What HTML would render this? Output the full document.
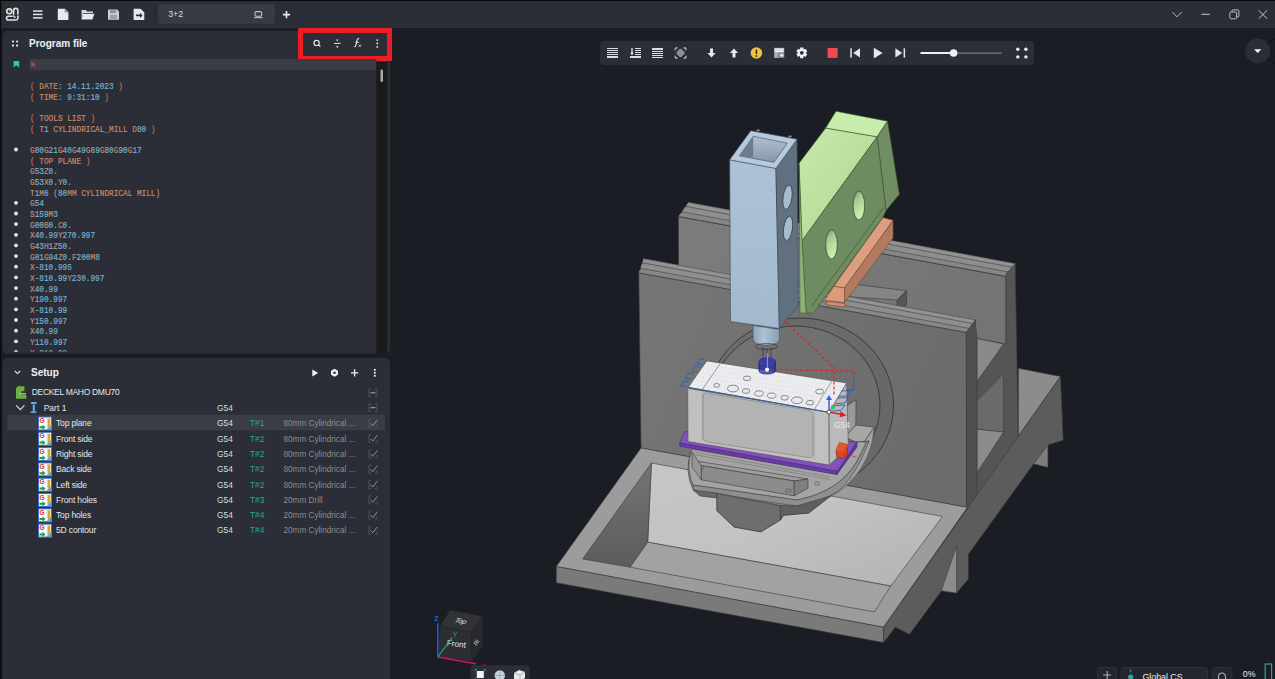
<!DOCTYPE html>
<html><head><meta charset="utf-8"><style>
html,body{margin:0;padding:0;background:#1b1d24;overflow:hidden;width:1275px;height:679px}
svg{display:block}
text{font-family:'Liberation Sans', sans-serif}
.mono text, text.mono{font-family:'Liberation Mono', monospace}
</style></head><body>
<svg width="1275" height="679" viewBox="0 0 1275 679">
<defs>
<clipPath id="codeclip"><rect x="3" y="57" width="373" height="294.8"/></clipPath>
</defs>
<rect x="0" y="0" width="1275" height="679" fill="#1b1d24"/>
<!-- 3D scene -->
<defs>
<linearGradient id="gFloor" x1="0" y1="0" x2="1" y2="1"><stop offset="0" stop-color="#c6c6c6"/><stop offset="0.5" stop-color="#c2c2c2"/><stop offset="1" stop-color="#b2b2b2"/></linearGradient><linearGradient id="gLW" x1="0" y1="0" x2="0" y2="1"><stop offset="0" stop-color="#747474"/><stop offset="1" stop-color="#5c5c5c"/></linearGradient>
<linearGradient id="gRear" x1="0" y1="0" x2="1" y2="0.4"><stop offset="0" stop-color="#7c7c7c"/><stop offset="1" stop-color="#747474"/></linearGradient>
<linearGradient id="gFront" x1="0" y1="0" x2="1" y2="0.3"><stop offset="0" stop-color="#767676"/><stop offset="1" stop-color="#6c6c6c"/></linearGradient>
<linearGradient id="gBlue" x1="0" y1="0" x2="0" y2="1"><stop offset="0" stop-color="#adc2d6"/><stop offset="1" stop-color="#a4b9cd"/></linearGradient>
<linearGradient id="gGreen" x1="0" y1="0" x2="1" y2="1"><stop offset="0" stop-color="#c6e8aa"/><stop offset="1" stop-color="#b2d696"/></linearGradient>
</defs>
<polygon points="678.5,216.5 1006,276.3 1006,400 678.5,330" fill="url(#gRear)" stroke="#3a3a3a" stroke-width="0.6" stroke-linejoin="round" />
<polygon points="688.4,202.4 1015.2,263.8 1015.2,267.8 1006,276.3 678.5,216.5 680.678,213.398 682.5966999999999,211.8047 685.1726,206.9966 686.4576999999999,206.3057" fill="#888888" stroke="#3a3a3a" stroke-width="0.6" stroke-linejoin="round" />
<polygon points="688.4,202.4 1015.2,263.8 1012.6516,267.2625 685.6577,206.3057" fill="#939393" />
<polygon points="685.1726,206.9966 1012.2008000000001,267.875 1009.0636000000001,272.1375 681.7967,211.8047" fill="#8e8e8e" />
<polygon points="680.678,213.398 1008.024,273.55 1006.0,276.3 678.5,216.5" fill="#868686" />
<polyline points="685.6577,206.3057 1012.6516,267.2625" fill="none" stroke="#4a4a4a" stroke-width="0.7" />
<polyline points="681.7967,211.8047 1009.0636000000001,272.1375" fill="none" stroke="#4a4a4a" stroke-width="0.7" />
<polyline points="678.5,216.5 1006.0,276.3" fill="none" stroke="#3e3e3e" stroke-width="0.7" />
<polyline points="688.4,202.4 1015.2,263.8" fill="none" stroke="#5a5a5a" stroke-width="0.5" />
<polygon points="1006,274 1015.2,263.8 1018.4,440 968,520 966,335 974.5,338 1006,344" fill="#555555" stroke="#3a3a3a" stroke-width="0.6" stroke-linejoin="round" />
<polygon points="974.5,338 1003.5,344 974.5,385" fill="#8a8a8a" stroke="#3a3a3a" stroke-width="0.6" stroke-linejoin="round" />
<polygon points="974.5,403 1003.5,373.5 1003.5,432 974.5,429" fill="#6a6a6a" stroke="#3a3a3a" stroke-width="0.6" stroke-linejoin="round" />
<polygon points="974.5,429 1003.5,432 974.5,476.5" fill="#8c8c8c" stroke="#3a3a3a" stroke-width="0.6" stroke-linejoin="round" />
<polygon points="1018.4,368.3 1060.5,376.5 1018.4,436.2" fill="#8c8c8c" stroke="#3a3a3a" stroke-width="0.6" stroke-linejoin="round" />
<polygon points="852,284 906.5,290.7 897,300 850,297" fill="#858585" stroke="#3a3a3a" stroke-width="0.6" stroke-linejoin="round" />
<polygon points="897,300 906.5,290.7 906.5,305 897,312" fill="#565656" stroke="#3a3a3a" stroke-width="0.6" stroke-linejoin="round" />
<polygon points="643.6,258.8 975.1,320 975.1,324 966.3,332.6 638.8,273 639.856,269.876 641.1983999999999,268.2714 642.0352,263.4292 643.0704,262.7334" fill="#888888" stroke="#3a3a3a" stroke-width="0.6" stroke-linejoin="round" />
<polygon points="643.6,258.8 975.1,320.0 972.6624,323.4902 642.2704,262.7334" fill="#939393" />
<polygon points="642.0352,263.4292 972.2312,324.1076 969.2304,328.4042 640.3983999999999,268.2714" fill="#8e8e8e" />
<polygon points="639.856,269.876 968.236,329.82800000000003 966.3,332.6 638.8,273.0" fill="#868686" />
<polyline points="642.2704,262.7334 972.6624,323.4902" fill="none" stroke="#4a4a4a" stroke-width="0.7" />
<polyline points="640.3983999999999,268.2714 969.2304,328.4042" fill="none" stroke="#4a4a4a" stroke-width="0.7" />
<polyline points="638.8,273.0 966.3,332.6" fill="none" stroke="#3e3e3e" stroke-width="0.7" />
<polyline points="643.6,258.8 975.1,320" fill="none" stroke="#5a5a5a" stroke-width="0.5" />
<polygon points="638.8,273 966.3,332.6 966.6,507.2 641,448" fill="url(#gFront)" stroke="#3a3a3a" stroke-width="0.6" stroke-linejoin="round" />
<polygon points="966.3,332.6 975.1,320 977.2,340 977.2,520 966.6,507.2" fill="#4e4e4e" stroke="#3a3a3a" stroke-width="0.6" stroke-linejoin="round" />
<polygon points="556.3,566.5 641,448 966.6,507.2 968.4,506 883.6,627.2" fill="#9c9c9c" stroke="#3a3a3a" stroke-width="0.6" stroke-linejoin="round" />
<polygon points="556.3,566.5 883.6,627.2 883.6,642.6 556.3,582.7" fill="#7a7a7a" stroke="#3a3a3a" stroke-width="0.6" stroke-linejoin="round" />
<polygon points="1060.5,376.5 883.6,627.2 883.6,642.6 895.3,627.2 909.5,634.3 939,594.3 941.3,590.7 956.6,593.1 968.4,579 968.4,554.2 1033.7,463.8 1047.9,467.3 1047.9,445 1063.2,440.2" fill="#5c5c5c" stroke="#3a3a3a" stroke-width="0.6" stroke-linejoin="round" />
<polygon points="1033.7,463.8 1047.9,445 1047.9,467.3" fill="#7e7e7e" stroke="#3a3a3a" stroke-width="0.6" stroke-linejoin="round" />
<polygon points="941.3,590.7 956.6,546 956.6,593.1" fill="#8c8c8c" stroke="#3a3a3a" stroke-width="0.6" stroke-linejoin="round" />
<polygon points="651.4,463 942.5,516.5 890.8,586 647.7,542.2" fill="url(#gFloor)" stroke="#3a3a3a" stroke-width="0.6" stroke-linejoin="round" />
<polygon points="651.4,463 647.7,542.2 630.1,567.2 582.6,559" fill="url(#gLW)" stroke="#3a3a3a" stroke-width="0.6" stroke-linejoin="round" />
<polygon points="647.7,542.2 890.8,586 874.3,611.9 630.1,567.2" fill="#a2a2a2" stroke="#3a3a3a" stroke-width="0.6" stroke-linejoin="round" />
<path fill-rule="evenodd" d="M893.5 405 A93.5 87 0 1 0 706.5 405 A93.5 87 0 1 0 893.5 405Z M880 405 A85 79 0 1 0 710 405 A85 79 0 1 0 880 405Z" fill="#5e5e5e" opacity="0.35"/>
<g fill="none" stroke="#2e2e2e" stroke-width="0.8">
<ellipse cx="800" cy="405" rx="93.5" ry="87"/>
<ellipse cx="795" cy="405" rx="85" ry="79"/>
</g>
<polygon points="846.5,406 856,400 855.8,425 846.5,436" fill="#9a9a9a" stroke="#3a3a3a" stroke-width="0.6" stroke-linejoin="round" />
<polygon points="845,437 855.8,425 874.4,427.2 862,445" fill="#a6a6a6" stroke="#3a3a3a" stroke-width="0.6" stroke-linejoin="round" />
<path d="M862 445 L874.4 427.2 Q872 460 850 482 Q838 494 826 498 L828 492 Q848 478 856 462Z" fill="#a2a2a2" stroke="#3a3a3a" stroke-width="0.5"/>
<path d="M691 452 Q684 471 693.3 490 L716.9 493 L716.9 510.6 L734.1 527 L760.8 531.8 L780.4 520 L783.5 515.3 L808.6 513 L830.6 496 Q856 472 869 441 L857 442 Z" fill="#8a8a8a" stroke="#3a3a3a" stroke-width="0.6"/>
<path d="M691 452 Q686 468 693 485 L797 500 Q838 492 856 463 Q862 452 866.5 442 L857 442 L837 474.5 L691.8 449 Z" fill="#a4a4a4" stroke="#3a3a3a" stroke-width="0.5"/>
<path d="M693 485 L797 500 Q838 492 856 463 Q862 452 866.5 442 L869 441 Q858 472 840 490 Q820 503 797 506 L694 491 Z" fill="#8e8e8e" stroke="#3a3a3a" stroke-width="0.5"/>
<polygon points="696,461 808,479 794.2,481 701.2,465.6" fill="#9e9e9e" stroke="#3a3a3a" stroke-width="0.6" stroke-linejoin="round" />
<polygon points="701.2,465.6 794.2,481 794.2,495.8 701.2,479.8" fill="#8c8c8c" stroke="#3a3a3a" stroke-width="0.6" stroke-linejoin="round" />
<polygon points="794.2,481 808,479 808,488.3 794.2,495.8" fill="#7e7e7e" stroke="#3a3a3a" stroke-width="0.6" stroke-linejoin="round" />
<polygon points="692,452 701.2,465.6 701.2,479.8 692,467" fill="#969696" stroke="#3a3a3a" stroke-width="0.6" stroke-linejoin="round" />
<polyline points="694,452 830,477" fill="none" stroke="#6a6a6a" stroke-width="0.5" />
<polyline points="694,454.5 830,479.5" fill="none" stroke="#6a6a6a" stroke-width="0.5" />
<path d="M786 489 h5 v3 h-5z M815 482 h4 v3 h-4z M703 466 v4" fill="none" stroke="#4a4a4a" stroke-width="0.5"/>
<polygon points="716.9,493 780.4,505.5 780.4,520 760.8,531.8 734.1,527 716.9,510.6" fill="#6e6e6e" stroke="#3a3a3a" stroke-width="0.6" stroke-linejoin="round" />
<polygon points="780.4,505.5 797,506 830.6,496 808.6,513 783.5,515.3 780.4,520" fill="#606060" stroke="#3a3a3a" stroke-width="0.6" stroke-linejoin="round" />
<polygon points="693.3,490 716.9,493 716.9,498 700,496" fill="#666666" stroke="#3a3a3a" stroke-width="0.6" stroke-linejoin="round" />
<polyline points="717,494 780,506" fill="none" stroke="#4a4a4a" stroke-width="0.6" stroke-dasharray="1.5 1"/>
<polygon points="684.6,431.6 857,442.1 837.6,471.3 679.7,443" fill="#8252ba" stroke="#4a2a70" stroke-width="0.6" stroke-linejoin="round" />
<polygon points="679.7,443 837.6,471.3 836.8,474.5 679.7,446.2" fill="#6a3aa8" stroke="#4a2a70" stroke-width="0.5" stroke-linejoin="round" />
<polygon points="837.6,471.3 857,442.1 857,447 836.8,474.5" fill="#5c3090" stroke="#4a2a70" stroke-width="0.5" stroke-linejoin="round" />
<polygon points="687.7,388.3 829,412.3 829.3,465.1 688,441.5" fill="#c0c0c0" stroke="#505050" stroke-width="0.6" stroke-linejoin="round" />
<polygon points="829,412.3 846.6,383 848.4,447 829.3,465.1" fill="#bababa" stroke="#505050" stroke-width="0.6" stroke-linejoin="round" />
<polygon points="706.8,360.9 846.6,383 829,412.3 688.3,387.4" fill="#ececee" stroke="#505050" stroke-width="0.6" stroke-linejoin="round" />
<polyline points="720,364 702.4,389.2" fill="none" stroke="#5a5a5a" stroke-width="0.6" />
<polyline points="832,381 814,410" fill="none" stroke="#6a6a6a" stroke-width="0.6" />
<path d="M706 393 L808 410 Q813 411 813 416 L813 454 Q813 458 808 457.5 L708 442 Q703 441 703 437 L703 397 Q703 392.5 706 393Z" fill="#b3b3b3" stroke="#7a7a7a" stroke-width="0.6"/>
<polyline points="702.4,389.2 702.4,441" fill="none" stroke="#8a8a8a" stroke-width="0.5" />
<polyline points="814,410 814,460" fill="none" stroke="#8a8a8a" stroke-width="0.5" />
<g stroke="#a8c4e0" stroke-width="0.7" stroke-dasharray="0.7 2.8">
<line x1="704.2" y1="364.7" x2="844.1" y2="387.2"/>
<line x1="701.5" y1="368.5" x2="841.6" y2="391.4"/>
<line x1="698.9" y1="372.3" x2="839.1" y2="395.6"/>
<line x1="696.2" y1="376.0" x2="836.5" y2="399.7"/>
<line x1="693.6" y1="379.8" x2="834.0" y2="403.9"/>
<line x1="690.9" y1="383.6" x2="831.5" y2="408.1"/>
</g>
<ellipse cx="716.7" cy="385.4" rx="3" ry="1.9" fill="none" stroke="#606060" stroke-width="0.7"/>
<ellipse cx="733" cy="388.5" rx="5.5" ry="3.4" fill="none" stroke="#606060" stroke-width="0.7"/>
<ellipse cx="746" cy="391" rx="3.7" ry="2.3" fill="none" stroke="#606060" stroke-width="0.7"/>
<ellipse cx="759" cy="393.5" rx="4.3" ry="2.7" fill="none" stroke="#606060" stroke-width="0.7"/>
<ellipse cx="771.7" cy="395.6" rx="4.2" ry="2.6" fill="none" stroke="#606060" stroke-width="0.7"/>
<ellipse cx="784.7" cy="397.8" rx="3.7" ry="2.3" fill="none" stroke="#606060" stroke-width="0.7"/>
<ellipse cx="797" cy="400.3" rx="5.5" ry="3.4" fill="none" stroke="#606060" stroke-width="0.7"/>
<ellipse cx="810" cy="402.7" rx="3.7" ry="2.3" fill="none" stroke="#606060" stroke-width="0.7"/>
<ellipse cx="747" cy="378.3" rx="3.7" ry="2.3" fill="none" stroke="#606060" stroke-width="0.7"/>
<ellipse cx="819.6" cy="391.6" rx="4" ry="2.5" fill="none" stroke="#606060" stroke-width="0.7"/>
<polyline points="688.3,387.4 829,412.3" fill="none" stroke="#2a5aa8" stroke-width="0.9" />
<g fill="none" stroke="#2a60b0" stroke-width="0.9">
<path d="M705 359.3 L700 358.8 L697 363.8 L703 364.40000000000003"/>
<path d="M699.8 366.8 L694.8 366.3 L691.8 371.3 L697.8 371.90000000000003"/>
<path d="M693.6 373.9 L688.6 373.4 L685.6 378.4 L691.6 379.0"/>
<path d="M688.3 381.4 L683.3 380.9 L680.3 385.9 L686.3 386.5"/>
<path d="M841 391 L852 390.4 L848 395.8 L839 396.4"/>
<path d="M837.5 398.2 L848.5 397.59999999999997 L844.5 403.0 L835.5 403.59999999999997"/>
<path d="M834 405.6 L845 405.0 L841 410.40000000000003 L832 411.0"/>
<path d="M854 378.5 v11.5 h-7"/>
</g>
<polygon points="826.8,301 845,303.5 845,307 827,305" fill="#d08c6c" stroke="#6a3a20" stroke-width="0.5" stroke-linejoin="round" />
<polygon points="844.5,287.8 893.1,220.3 893.1,238 844.5,302.6" fill="#b27a60" stroke="#6a3a20" stroke-width="0.5" stroke-linejoin="round" />
<polygon points="833.8,286.4 882.8,217.4 893.1,220.3 844.5,287.8" fill="#dc9e80" stroke="#6a3a20" stroke-width="0.5" stroke-linejoin="round" />
<polygon points="824.6,300.3 833.8,286.4 844.5,287.8 844.5,302.6" fill="#dc9c7c" stroke="#6a3a20" stroke-width="0.5" stroke-linejoin="round" />
<polygon points="799,163.3 825.7,128 877.2,136.8 802,240.8" fill="url(#gGreen)" stroke="#3a5a2a" stroke-width="0.6" stroke-linejoin="round" />
<polygon points="825.7,128 836,111.2 887.5,121.2 877.2,136.8" fill="#c8ecac" stroke="#3a5a2a" stroke-width="0.6" stroke-linejoin="round" />
<polygon points="877.2,136.8 887.5,121.2 899.3,194.3 886,210.5" fill="#718d63" stroke="#3a5a2a" stroke-width="0.6" stroke-linejoin="round" />
<polygon points="802,240.8 877.2,136.8 886,210.5 882.8,217.4 815,310.7 812.4,313 806,313" fill="#6f8b61" stroke="#3a5a2a" stroke-width="0.6" stroke-linejoin="round" />
<polyline points="884,207 811.8,306" fill="none" stroke="#3a5a2a" stroke-width="0.7" />
<polygon points="799,163.3 802,240.8 806,313 800,313" fill="#90b07a" stroke="#3a5a2a" stroke-width="0.5" stroke-linejoin="round" />
<linearGradient id="gHole" x1="0" y1="0" x2="0.4" y2="1"><stop offset="0" stop-color="#6a8a5a"/><stop offset="0.35" stop-color="#a8c890"/><stop offset="1" stop-color="#d0f0b0"/></linearGradient><ellipse cx="858.9" cy="205.4" rx="5.8" ry="14.4" fill="url(#gHole)" stroke="#2e4a22" stroke-width="0.7"/>
<ellipse cx="831.5" cy="244.3" rx="5.8" ry="14.6" fill="url(#gHole)" stroke="#2e4a22" stroke-width="0.7"/>
<polygon points="729.7,159.8 775.9,168.4 779.3,328.4 730.5,321.5" fill="url(#gBlue)" stroke="#3a4a5a" stroke-width="0.6" stroke-linejoin="round" />
<polygon points="775.9,168.4 797,139.2 798.4,306.3 779.3,328.4" fill="#617080" stroke="#3a4a5a" stroke-width="0.6" stroke-linejoin="round" />
<polygon points="729.7,159.8 750.8,130.7 797,139.2 775.9,168.4" fill="#b6cade" stroke="#4a5a6a" stroke-width="0.6" stroke-linejoin="round" />
<linearGradient id="gInner" x1="0" y1="0" x2="0" y2="1"><stop offset="0" stop-color="#b0c0d0"/><stop offset="1" stop-color="#8898a8"/></linearGradient>
<polygon points="739.4,155.8 753.2,136.3 787.3,143.2 773.9,162.3" fill="url(#gInner)" stroke="#3a4a5a" stroke-width="0.6" stroke-linejoin="round" />
<rect x="756.5" y="129.6" width="3" height="1.6" fill="#8a9aaa"/><rect x="788.5" y="135.6" width="3" height="1.6" fill="#8a9aaa"/>
<polygon points="739.4,155.8 753.2,136.3 753.2,157.4 745,157" fill="#6c7c8c" />
<ellipse cx="787.5" cy="197.3" rx="4.4" ry="12.2" transform="rotate(8 787.5 197.3)" fill="#a8bcd0" stroke="#2a3440" stroke-width="0.7"/>
<ellipse cx="788" cy="228.4" rx="4.4" ry="12.2" transform="rotate(8 788 228.4)" fill="#a8bcd0" stroke="#2a3440" stroke-width="0.7"/>
<linearGradient id="gNose" x1="0" y1="0" x2="1" y2="0"><stop offset="0" stop-color="#8ea2b6"/><stop offset="0.4" stop-color="#aec2d6"/><stop offset="1" stop-color="#8a9eb2"/></linearGradient>
<path d="M753 325.5 L779.5 329.5 L779.5 338 Q779.5 345 766 345 Q753 345 753 338 Z" fill="url(#gNose)" stroke="#3a4a5a" stroke-width="0.5"/>
<g fill="none" stroke="#2a2a2a" stroke-width="0.6"><ellipse cx="766.5" cy="346.5" rx="11" ry="3"/><path d="M763 347 v11 M771 347 v11 M767 348 v10"/></g>
<path d="M759 361 v10 a8.2 3 0 0 0 16.4 0 v-10 a8.2 3 0 0 0 -16.4 0Z" fill="#2424a8" fill-opacity="0.7" stroke="#10109a" stroke-width="0.7"/>
<ellipse cx="767.2" cy="361" rx="8.2" ry="3" fill="none" stroke="#4a4ae0" stroke-width="0.5"/>
<path d="M767.5 353 v14" stroke="#6a9af0" stroke-width="1.2"/>
<circle cx="767.1" cy="369.6" r="2.1" fill="#ffffff"/>
<g fill="none" stroke="#e02020" stroke-width="1.1" stroke-dasharray="3 2">
<path d="M786 322 L834 368 L834 395 M770 369.6 L854 371 L854 378"/>
</g>
<path d="M829 412 v-14" stroke="#3060e0" stroke-width="1.5"/><path d="M826 400 l3-5 l3 5z" fill="#3060e0"/>
<path d="M829 412 L842 414.6" stroke="#e02020" stroke-width="1.5"/><path d="M840.5 411.2 L846.6 415.6 L839.6 417.2z" fill="#e02020"/>
<circle cx="833" cy="407" r="2.2" fill="#30c060"/>
<circle cx="829" cy="412" r="2" fill="#ffffff" stroke="#000" stroke-width="0.6"/>
<text x="834" y="427.5" fill="#e8e8e8" font-size="8.5">G54</text>
<polygon points="835.9,450.4 839.4,442.5 847.4,444.3 847.4,454.9 843,458.4 836.8,457.5" fill="#d44a22" stroke="#6a2010" stroke-width="0.5" stroke-linejoin="round" />
<polygon points="835.9,450.4 839.4,442.5 847.4,444.3 843,451.5" fill="#e05a30" />
<path d="M843 454 l14 3" stroke="#e02020" stroke-width="1" stroke-dasharray="2 1.5"/>
<!-- top bar -->
<rect x="0" y="0" width="1275" height="28" fill="#2b2e36"/>
<rect x="0" y="0" width="1275" height="1" fill="#08090b"/>
<rect x="0" y="0" width="1.2" height="679" fill="#08090b"/>
<!-- logo -->
<g fill="none" stroke="#e2e2e4" stroke-width="1.6" stroke-linecap="round">
<circle cx="9.3" cy="11.2" r="2.5"/>
<path d="M13.6 14.2 V10.5 a2.15 2.15 0 0 1 4.3 0 V14"/>
<path d="M12.2 16.3 H8.4 a1.85 1.85 0 0 0 0 3.7 H15.8 a1.9 1.9 0 0 0 2.1-1.9 V16"/>
<path d="M13.6 16 L15.2 17.4" stroke-width="1.3"/>
<path d="M9.3 10.9 L10.6 9.7" stroke-width="1"/>
</g>
<!-- hamburger -->
<g fill="#e6e6e8"><rect x="33" y="10.3" width="9.5" height="1.5"/><rect x="33" y="13.7" width="9.5" height="1.5"/><rect x="33" y="17.1" width="9.5" height="1.5"/></g>
<!-- new file -->
<path d="M57.8 8.8 h7 l3.6 3.6 v7.6 h-10.6z" fill="#e8e8ea"/><path d="M64.6 8.8 v3.8 h3.8" fill="#9a9ca2"/>
<!-- folder -->
<path d="M81.6 10 h4.2 l1.3 1.4 h5.8 v1.6 h-9.6 l-1.7 6.4z" fill="#d8d8da"/><path d="M83 13.8 h11.4 l-2 5.6 h-10.8z" fill="#e8e8ea"/>
<!-- save -->
<path d="M108 9.4 h9 l2 2 v8.4 h-11z" fill="#cfd0d3"/><rect x="110" y="10.2" width="6" height="2.8" fill="#8e9096"/><rect x="110" y="14.8" width="7" height="4.4" fill="#9ea0a5"/>
<!-- export -->
<path d="M133.6 8.8 h7 l3.7 3.6 v7.6 h-10.7z" fill="#e8e8ea"/><path d="M136 14.6 h4 v-1.8 l2.6 2.6 l-2.6 2.6 v-1.8 h-4z" fill="#2b2e36"/>
<rect x="155" y="6" width="1" height="16" fill="#24262d"/>
<!-- tab -->
<rect x="158.2" y="3.8" width="116.7" height="20" rx="3" fill="#383b44"/>
<text x="168.2" y="16.9" fill="#d8d9dc" font-size="8.8">3+2</text>
<g fill="none" stroke="#bfc1c5" stroke-width="1.1"><rect x="255" y="11.6" width="6.6" height="4.6" rx="1.2"/><path d="M254.2 17.6 h8.2"/></g>
<path d="M286.5 11 v7.2 M282.9 14.6 h7.2" stroke="#eeeef0" stroke-width="1.6"/>
<!-- window controls -->
<path d="M1172.3 12 l4.7 4.8 l4.7-4.8" fill="none" stroke="#b8b9bd" stroke-width="1"/>
<path d="M1201.3 14.3 h8.6" stroke="#b8b9bd" stroke-width="1.1"/>
<g fill="none" stroke="#b8b9bd" stroke-width="1"><rect x="1229.8" y="12" width="6.8" height="6.8" rx="1"/><path d="M1232 11.8 v-1 a0.9 0.9 0 0 1 0.9-0.9 h5.1 a0.9 0.9 0 0 1 0.9 0.9 v5.1 a0.9 0.9 0 0 1 -0.9 0.9 h-1.3"/></g>
<path d="M1258.6 10.3 l8.6 8.5 M1267.2 10.3 l-8.6 8.5" stroke="#c4c5c8" stroke-width="1"/>

<!-- left panels -->
<rect x="2.6" y="31" width="387.4" height="322.6" rx="5" fill="#2b2e37"/>
<rect x="2.6" y="358" width="387.4" height="330" rx="5" fill="#2b2e37"/>
<!-- program header -->
<g fill="#f0f0f2"><circle cx="13" cy="41.5" r="1.1"/><circle cx="17.1" cy="41.5" r="1.1"/><circle cx="13" cy="45.6" r="1.1"/><circle cx="17.1" cy="45.6" r="1.1"/></g>
<text x="29" y="46.9" fill="#f2f2f4" font-size="10" font-weight="bold">Program file</text>
<!-- header icons -->
<g fill="none" stroke="#e4e4e6" stroke-width="1.2"><circle cx="316.6" cy="42.9" r="2.6"/><path d="M318.6 44.9 l1.8 1.8"/></g>
<g fill="#e4e4e6"><circle cx="337.3" cy="40.1" r="0.9"/><circle cx="337.3" cy="46.7" r="0.9"/><rect x="334" y="42.9" width="6.6" height="1"/></g>
<path d="M354.3 46.8 c1.3 0 1.6-0.8 1.9-2.5 l0.7-3.6 c0.3-1.5 0.8-2.3 2.2-2.3 M355.6 42.4 h3" fill="none" stroke="#e4e4e6" stroke-width="1.1"/>
<path d="M358.7 44.6 l2.2 2.2 M360.9 44.6 l-2.2 2.2" stroke="#e4e4e6" stroke-width="0.9"/>
<g fill="#e4e4e6"><circle cx="377.3" cy="40.1" r="0.95"/><circle cx="377.3" cy="43.5" r="0.95"/><circle cx="377.3" cy="46.9" r="0.95"/></g>
<!-- red highlight box -->
<rect x="300.5" y="30.5" width="89" height="28" fill="none" stroke="#ee1c25" stroke-width="5"/>
<!-- code area -->
<rect x="29.4" y="59" width="347" height="11" fill="#3a3d46"/>
<rect x="376.3" y="62" width="11" height="291.6" fill="#1a1a1c"/>
<rect x="380.5" y="69.4" width="2.5" height="12.6" rx="1.2" fill="#a8a8aa"/>
<path d="M13.6 61 h5.6 v6.4 l-2.8-2.2 l-2.8 2.2z" fill="#1ed3a2"/>
<g clip-path="url(#codeclip)" class="mono" font-size="8.8" stroke-width="0.18">
<text x="30.5" y="67.40" font-size="7.5" fill="#b86a58">%</text>
<text x="34.05" y="89.21" transform="scale(0.881,1)" xml:space="preserve"><tspan fill="#c0705a" stroke="#c0705a">( </tspan><tspan fill="#c98a62" stroke="#c98a62">DATE</tspan><tspan fill="#72b2d6" stroke="#72b2d6">: 14.11.2023 </tspan><tspan fill="#c0705a" stroke="#c0705a">)</tspan></text>
<text x="34.05" y="99.87" transform="scale(0.881,1)" xml:space="preserve"><tspan fill="#c0705a" stroke="#c0705a">( </tspan><tspan fill="#c98a62" stroke="#c98a62">TIME</tspan><tspan fill="#72b2d6" stroke="#72b2d6">: 9:31:10 </tspan><tspan fill="#c0705a" stroke="#c0705a">)</tspan></text>
<text x="34.05" y="121.18" transform="scale(0.881,1)" xml:space="preserve"><tspan fill="#c0705a" stroke="#c0705a">( </tspan><tspan fill="#c98a62" stroke="#c98a62">TOOLS LIST </tspan><tspan fill="#c0705a" stroke="#c0705a">)</tspan></text>
<text x="34.05" y="131.83" transform="scale(0.881,1)" xml:space="preserve"><tspan fill="#c0705a" stroke="#c0705a">( </tspan><tspan fill="#c98a62" stroke="#c98a62">T</tspan><tspan fill="#72b2d6" stroke="#72b2d6">1 </tspan><tspan fill="#c98a62" stroke="#c98a62">CYLINDRICAL_MILL D</tspan><tspan fill="#72b2d6" stroke="#72b2d6">80 </tspan><tspan fill="#c0705a" stroke="#c0705a">)</tspan></text>
<circle cx="16" cy="149.5" r="1.9" fill="#e8e8ea"/>
<text x="34.05" y="153.14" transform="scale(0.881,1)" xml:space="preserve"><tspan fill="#c98a62" stroke="#c98a62">G</tspan><tspan fill="#72b2d6" stroke="#72b2d6">00</tspan><tspan fill="#c98a62" stroke="#c98a62">G</tspan><tspan fill="#72b2d6" stroke="#72b2d6">21</tspan><tspan fill="#c98a62" stroke="#c98a62">G</tspan><tspan fill="#72b2d6" stroke="#72b2d6">40</tspan><tspan fill="#c98a62" stroke="#c98a62">G</tspan><tspan fill="#72b2d6" stroke="#72b2d6">49</tspan><tspan fill="#c98a62" stroke="#c98a62">G</tspan><tspan fill="#72b2d6" stroke="#72b2d6">69</tspan><tspan fill="#c98a62" stroke="#c98a62">G</tspan><tspan fill="#72b2d6" stroke="#72b2d6">80</tspan><tspan fill="#c98a62" stroke="#c98a62">G</tspan><tspan fill="#72b2d6" stroke="#72b2d6">90</tspan><tspan fill="#c98a62" stroke="#c98a62">G</tspan><tspan fill="#72b2d6" stroke="#72b2d6">17</tspan></text>
<text x="34.05" y="163.80" transform="scale(0.881,1)" xml:space="preserve"><tspan fill="#c0705a" stroke="#c0705a">( </tspan><tspan fill="#c98a62" stroke="#c98a62">TOP PLANE </tspan><tspan fill="#c0705a" stroke="#c0705a">)</tspan></text>
<text x="34.05" y="174.45" transform="scale(0.881,1)" xml:space="preserve"><tspan fill="#c98a62" stroke="#c98a62">G</tspan><tspan fill="#72b2d6" stroke="#72b2d6">53</tspan><tspan fill="#c98a62" stroke="#c98a62">Z</tspan><tspan fill="#72b2d6" stroke="#72b2d6">0.</tspan></text>
<text x="34.05" y="185.11" transform="scale(0.881,1)" xml:space="preserve"><tspan fill="#c98a62" stroke="#c98a62">G</tspan><tspan fill="#72b2d6" stroke="#72b2d6">53</tspan><tspan fill="#c98a62" stroke="#c98a62">X</tspan><tspan fill="#72b2d6" stroke="#72b2d6">0.</tspan><tspan fill="#c98a62" stroke="#c98a62">Y</tspan><tspan fill="#72b2d6" stroke="#72b2d6">0.</tspan></text>
<text x="34.05" y="195.76" transform="scale(0.881,1)" xml:space="preserve"><tspan fill="#c98a62" stroke="#c98a62">T</tspan><tspan fill="#72b2d6" stroke="#72b2d6">1</tspan><tspan fill="#c98a62" stroke="#c98a62">M</tspan><tspan fill="#72b2d6" stroke="#72b2d6">6 </tspan><tspan fill="#c98a62" stroke="#c98a62">(</tspan><tspan fill="#72b2d6" stroke="#72b2d6">80</tspan><tspan fill="#c98a62" stroke="#c98a62">MM CYLINDRICAL MILL)</tspan></text>
<circle cx="16" cy="202.8" r="1.9" fill="#e8e8ea"/>
<text x="34.05" y="206.41" transform="scale(0.881,1)" xml:space="preserve"><tspan fill="#c98a62" stroke="#c98a62">G</tspan><tspan fill="#72b2d6" stroke="#72b2d6">54</tspan></text>
<circle cx="16" cy="213.5" r="1.9" fill="#e8e8ea"/>
<text x="34.05" y="217.07" transform="scale(0.881,1)" xml:space="preserve"><tspan fill="#c98a62" stroke="#c98a62">S</tspan><tspan fill="#72b2d6" stroke="#72b2d6">159</tspan><tspan fill="#c98a62" stroke="#c98a62">M</tspan><tspan fill="#72b2d6" stroke="#72b2d6">3</tspan></text>
<circle cx="16" cy="224.1" r="1.9" fill="#e8e8ea"/>
<text x="34.05" y="227.72" transform="scale(0.881,1)" xml:space="preserve"><tspan fill="#c98a62" stroke="#c98a62">G</tspan><tspan fill="#72b2d6" stroke="#72b2d6">00</tspan><tspan fill="#c98a62" stroke="#c98a62">B</tspan><tspan fill="#72b2d6" stroke="#72b2d6">0.</tspan><tspan fill="#c98a62" stroke="#c98a62">C</tspan><tspan fill="#72b2d6" stroke="#72b2d6">0.</tspan></text>
<circle cx="16" cy="234.8" r="1.9" fill="#e8e8ea"/>
<text x="34.05" y="238.38" transform="scale(0.881,1)" xml:space="preserve"><tspan fill="#c98a62" stroke="#c98a62">X</tspan><tspan fill="#72b2d6" stroke="#72b2d6">40.99</tspan><tspan fill="#c98a62" stroke="#c98a62">Y</tspan><tspan fill="#72b2d6" stroke="#72b2d6">270.997</tspan></text>
<circle cx="16" cy="245.4" r="1.9" fill="#e8e8ea"/>
<text x="34.05" y="249.03" transform="scale(0.881,1)" xml:space="preserve"><tspan fill="#c98a62" stroke="#c98a62">G</tspan><tspan fill="#72b2d6" stroke="#72b2d6">43</tspan><tspan fill="#c98a62" stroke="#c98a62">H</tspan><tspan fill="#72b2d6" stroke="#72b2d6">1</tspan><tspan fill="#c98a62" stroke="#c98a62">Z</tspan><tspan fill="#72b2d6" stroke="#72b2d6">50.</tspan></text>
<circle cx="16" cy="256.1" r="1.9" fill="#e8e8ea"/>
<text x="34.05" y="259.69" transform="scale(0.881,1)" xml:space="preserve"><tspan fill="#c98a62" stroke="#c98a62">G</tspan><tspan fill="#72b2d6" stroke="#72b2d6">01</tspan><tspan fill="#c98a62" stroke="#c98a62">G</tspan><tspan fill="#72b2d6" stroke="#72b2d6">94</tspan><tspan fill="#c98a62" stroke="#c98a62">Z</tspan><tspan fill="#72b2d6" stroke="#72b2d6">0.</tspan><tspan fill="#c98a62" stroke="#c98a62">F</tspan><tspan fill="#72b2d6" stroke="#72b2d6">200</tspan><tspan fill="#c98a62" stroke="#c98a62">M</tspan><tspan fill="#72b2d6" stroke="#72b2d6">8</tspan></text>
<circle cx="16" cy="266.7" r="1.9" fill="#e8e8ea"/>
<text x="34.05" y="270.35" transform="scale(0.881,1)" xml:space="preserve"><tspan fill="#c98a62" stroke="#c98a62">X</tspan><tspan fill="#72b2d6" stroke="#72b2d6">-810.995</tspan></text>
<circle cx="16" cy="277.4" r="1.9" fill="#e8e8ea"/>
<text x="34.05" y="281.00" transform="scale(0.881,1)" xml:space="preserve"><tspan fill="#c98a62" stroke="#c98a62">X</tspan><tspan fill="#72b2d6" stroke="#72b2d6">-810.99</tspan><tspan fill="#c98a62" stroke="#c98a62">Y</tspan><tspan fill="#72b2d6" stroke="#72b2d6">230.997</tspan></text>
<circle cx="16" cy="288.1" r="1.9" fill="#e8e8ea"/>
<text x="34.05" y="291.65" transform="scale(0.881,1)" xml:space="preserve"><tspan fill="#c98a62" stroke="#c98a62">X</tspan><tspan fill="#72b2d6" stroke="#72b2d6">40.99</tspan></text>
<circle cx="16" cy="298.7" r="1.9" fill="#e8e8ea"/>
<text x="34.05" y="302.31" transform="scale(0.881,1)" xml:space="preserve"><tspan fill="#c98a62" stroke="#c98a62">Y</tspan><tspan fill="#72b2d6" stroke="#72b2d6">190.997</tspan></text>
<circle cx="16" cy="309.4" r="1.9" fill="#e8e8ea"/>
<text x="34.05" y="312.97" transform="scale(0.881,1)" xml:space="preserve"><tspan fill="#c98a62" stroke="#c98a62">X</tspan><tspan fill="#72b2d6" stroke="#72b2d6">-810.99</tspan></text>
<circle cx="16" cy="320.0" r="1.9" fill="#e8e8ea"/>
<text x="34.05" y="323.62" transform="scale(0.881,1)" xml:space="preserve"><tspan fill="#c98a62" stroke="#c98a62">Y</tspan><tspan fill="#72b2d6" stroke="#72b2d6">150.997</tspan></text>
<circle cx="16" cy="330.7" r="1.9" fill="#e8e8ea"/>
<text x="34.05" y="334.27" transform="scale(0.881,1)" xml:space="preserve"><tspan fill="#c98a62" stroke="#c98a62">X</tspan><tspan fill="#72b2d6" stroke="#72b2d6">40.99</tspan></text>
<circle cx="16" cy="341.3" r="1.9" fill="#e8e8ea"/>
<text x="34.05" y="344.93" transform="scale(0.881,1)" xml:space="preserve"><tspan fill="#c98a62" stroke="#c98a62">Y</tspan><tspan fill="#72b2d6" stroke="#72b2d6">110.997</tspan></text>
<circle cx="16" cy="352.0" r="1.9" fill="#e8e8ea"/>
<text x="34.05" y="355.59" transform="scale(0.881,1)" xml:space="preserve"><tspan fill="#c98a62" stroke="#c98a62">X</tspan><tspan fill="#72b2d6" stroke="#72b2d6">-810.99</tspan></text>
</g>
<!-- setup header -->
<path d="M14.8 371 l2.7 2.6 l2.7-2.6" fill="none" stroke="#e4e4e6" stroke-width="1.1"/>
<text x="31" y="375.8" fill="#f2f2f4" font-size="10" font-weight="bold">Setup</text>
<path d="M312.3 369.5 l5.9 3.5 l-5.9 3.5z" fill="#f0f0f2"/>
<g><polygon points="334.50,376.80 331.04,374.80 331.04,370.80 334.50,368.80 337.96,370.80 337.96,374.80" fill="#f0f0f2"/><circle cx="334.5" cy="372.8" r="1.3" fill="#2b2e37"/></g>
<path d="M354.6 369.2 v7.2 M351 372.8 h7.2" stroke="#f0f0f2" stroke-width="1.3"/>
<g fill="#f0f0f2"><rect x="373.9" y="368.9" width="1.8" height="1.8"/><rect x="373.9" y="371.9" width="1.8" height="1.8"/><rect x="373.9" y="374.9" width="1.8" height="1.8"/></g>
<!-- machine row -->
<path d="M16 388.5 l1.8-2.2 h6.6 v5 h-3 v3.5 h5 v4 h-10.4z" fill="#6db040"/><rect x="19.5" y="393" width="6.5" height="1.4" fill="#c9a0d0"/>
<text x="31.7" y="395.2" fill="#e6e6e8" font-size="8.5" letter-spacing="-0.3">DECKEL MAHO DMU70</text>
<g transform="translate(368.5,388.5)" stroke="#54565c" fill="none" stroke-width="0.9"><path d="M2.5 0.5 h-2 v7.5 h2 M6.5 0.5 h2 v7.5 h-2"/><path d="M2 4.3 h5" stroke="#8e9094" stroke-width="1.3"/></g>
<!-- part row -->
<path d="M16.2 405.4 l4.1 4.3 l4.1-4.3" fill="none" stroke="#e4e4e6" stroke-width="1.1"/>
<g fill="#5aa8e8"><rect x="31" y="402" width="5.6" height="2"/><rect x="32.7" y="404.5" width="2.2" height="8.5"/><rect x="30.5" y="411.5" width="6" height="1.5"/></g>
<text x="43.7" y="410.5" fill="#e6e6e8" font-size="8.5">Part 1</text>
<text x="217" y="410.5" fill="#dcdcde" font-size="8.4">G54</text>
<g transform="translate(368.5,403.3)" stroke="#54565c" fill="none" stroke-width="0.9"><path d="M2.5 0.5 h-2 v7.5 h2 M6.5 0.5 h2 v7.5 h-2"/><path d="M2 4.3 h5" stroke="#8e9094" stroke-width="1.3"/></g>
<rect x="7.5" y="414.7" width="377.5" height="15.7" fill="#3a3d46"/>
<g transform="translate(38,416.5)">
<rect x="0.5" y="0.5" width="13" height="13" fill="#f4f8fc" stroke="#3a6fd0" stroke-width="1"/>
<path d="M8 13.5 L13.5 8 L13.5 13.5Z" fill="#5aa0e0"/>
<text x="1.6" y="6.6" font-family="Liberation Sans" font-weight="bold" font-size="6.5" fill="#e03030">G</text>
<path d="M1.5 9.8 h3 v-1.6 l3 2.6 l-3 2.6 v-1.6 h-3z" fill="#20a030"/>
<rect x="9.5" y="2" width="2.8" height="9" fill="#d8a830"/>
</g>
<text x="56" y="426.3" fill="#e6e6e8" font-size="8.5" letter-spacing="-0.15">Top plane</text>
<text x="217" y="426.3" fill="#dcdcde" font-size="8.4">G54</text>
<text x="250" y="426.3" fill="#2aa79b" font-size="8.4">T#1</text>
<text x="283.5" y="426.3" fill="#8a8c92" font-size="8.2">80mm Cylindrical ...</text>
<g transform="translate(368.5,418.8)" stroke="#54565c" fill="none" stroke-width="0.9"><path d="M2.5 0.5 h-2 v8 h2 M6.5 8.5 h2 v-3"/><path d="M2 4.5 l2.3 2.5 l4.5-6" stroke="#8e9094" stroke-width="1"/></g>
<g transform="translate(38,431.8)">
<rect x="0.5" y="0.5" width="13" height="13" fill="#f4f8fc" stroke="#3a6fd0" stroke-width="1"/>
<path d="M8 13.5 L13.5 8 L13.5 13.5Z" fill="#5aa0e0"/>
<text x="1.6" y="6.6" font-family="Liberation Sans" font-weight="bold" font-size="6.5" fill="#e03030">G</text>
<path d="M1.5 9.8 h3 v-1.6 l3 2.6 l-3 2.6 v-1.6 h-3z" fill="#20a030"/>
<rect x="9.5" y="2" width="2.8" height="9" fill="#d8a830"/>
</g>
<text x="56" y="441.6" fill="#e6e6e8" font-size="8.5" letter-spacing="-0.15">Front side</text>
<text x="217" y="441.6" fill="#dcdcde" font-size="8.4">G54</text>
<text x="250" y="441.6" fill="#2aa79b" font-size="8.4">T#2</text>
<text x="283.5" y="441.6" fill="#8a8c92" font-size="8.2">80mm Cylindrical ...</text>
<g transform="translate(368.5,434.1)" stroke="#54565c" fill="none" stroke-width="0.9"><path d="M2.5 0.5 h-2 v8 h2 M6.5 8.5 h2 v-3"/><path d="M2 4.5 l2.3 2.5 l4.5-6" stroke="#8e9094" stroke-width="1"/></g>
<g transform="translate(38,447.1)">
<rect x="0.5" y="0.5" width="13" height="13" fill="#f4f8fc" stroke="#3a6fd0" stroke-width="1"/>
<path d="M8 13.5 L13.5 8 L13.5 13.5Z" fill="#5aa0e0"/>
<text x="1.6" y="6.6" font-family="Liberation Sans" font-weight="bold" font-size="6.5" fill="#e03030">G</text>
<path d="M1.5 9.8 h3 v-1.6 l3 2.6 l-3 2.6 v-1.6 h-3z" fill="#20a030"/>
<rect x="9.5" y="2" width="2.8" height="9" fill="#d8a830"/>
</g>
<text x="56" y="456.9" fill="#e6e6e8" font-size="8.5" letter-spacing="-0.15">Right side</text>
<text x="217" y="456.9" fill="#dcdcde" font-size="8.4">G54</text>
<text x="250" y="456.9" fill="#2aa79b" font-size="8.4">T#2</text>
<text x="283.5" y="456.9" fill="#8a8c92" font-size="8.2">80mm Cylindrical ...</text>
<g transform="translate(368.5,449.40000000000003)" stroke="#54565c" fill="none" stroke-width="0.9"><path d="M2.5 0.5 h-2 v8 h2 M6.5 8.5 h2 v-3"/><path d="M2 4.5 l2.3 2.5 l4.5-6" stroke="#8e9094" stroke-width="1"/></g>
<g transform="translate(38,462.4)">
<rect x="0.5" y="0.5" width="13" height="13" fill="#f4f8fc" stroke="#3a6fd0" stroke-width="1"/>
<path d="M8 13.5 L13.5 8 L13.5 13.5Z" fill="#5aa0e0"/>
<text x="1.6" y="6.6" font-family="Liberation Sans" font-weight="bold" font-size="6.5" fill="#e03030">G</text>
<path d="M1.5 9.8 h3 v-1.6 l3 2.6 l-3 2.6 v-1.6 h-3z" fill="#20a030"/>
<rect x="9.5" y="2" width="2.8" height="9" fill="#d8a830"/>
</g>
<text x="56" y="472.2" fill="#e6e6e8" font-size="8.5" letter-spacing="-0.15">Back side</text>
<text x="217" y="472.2" fill="#dcdcde" font-size="8.4">G54</text>
<text x="250" y="472.2" fill="#2aa79b" font-size="8.4">T#2</text>
<text x="283.5" y="472.2" fill="#8a8c92" font-size="8.2">80mm Cylindrical ...</text>
<g transform="translate(368.5,464.7)" stroke="#54565c" fill="none" stroke-width="0.9"><path d="M2.5 0.5 h-2 v8 h2 M6.5 8.5 h2 v-3"/><path d="M2 4.5 l2.3 2.5 l4.5-6" stroke="#8e9094" stroke-width="1"/></g>
<g transform="translate(38,477.7)">
<rect x="0.5" y="0.5" width="13" height="13" fill="#f4f8fc" stroke="#3a6fd0" stroke-width="1"/>
<path d="M8 13.5 L13.5 8 L13.5 13.5Z" fill="#5aa0e0"/>
<text x="1.6" y="6.6" font-family="Liberation Sans" font-weight="bold" font-size="6.5" fill="#e03030">G</text>
<path d="M1.5 9.8 h3 v-1.6 l3 2.6 l-3 2.6 v-1.6 h-3z" fill="#20a030"/>
<rect x="9.5" y="2" width="2.8" height="9" fill="#d8a830"/>
</g>
<text x="56" y="487.5" fill="#e6e6e8" font-size="8.5" letter-spacing="-0.15">Left side</text>
<text x="217" y="487.5" fill="#dcdcde" font-size="8.4">G54</text>
<text x="250" y="487.5" fill="#2aa79b" font-size="8.4">T#2</text>
<text x="283.5" y="487.5" fill="#8a8c92" font-size="8.2">80mm Cylindrical ...</text>
<g transform="translate(368.5,480.0)" stroke="#54565c" fill="none" stroke-width="0.9"><path d="M2.5 0.5 h-2 v8 h2 M6.5 8.5 h2 v-3"/><path d="M2 4.5 l2.3 2.5 l4.5-6" stroke="#8e9094" stroke-width="1"/></g>
<g transform="translate(38,493.0)">
<rect x="0.5" y="0.5" width="13" height="13" fill="#f4f8fc" stroke="#3a6fd0" stroke-width="1"/>
<path d="M8 13.5 L13.5 8 L13.5 13.5Z" fill="#5aa0e0"/>
<text x="1.6" y="6.6" font-family="Liberation Sans" font-weight="bold" font-size="6.5" fill="#e03030">G</text>
<path d="M1.5 9.8 h3 v-1.6 l3 2.6 l-3 2.6 v-1.6 h-3z" fill="#20a030"/>
<rect x="9.5" y="2" width="2.8" height="9" fill="#d8a830"/>
</g>
<text x="56" y="502.8" fill="#e6e6e8" font-size="8.5" letter-spacing="-0.15">Front holes</text>
<text x="217" y="502.8" fill="#dcdcde" font-size="8.4">G54</text>
<text x="250" y="502.8" fill="#2aa79b" font-size="8.4">T#3</text>
<text x="283.5" y="502.8" fill="#8a8c92" font-size="8.2">20mm Drill</text>
<g transform="translate(368.5,495.3)" stroke="#54565c" fill="none" stroke-width="0.9"><path d="M2.5 0.5 h-2 v8 h2 M6.5 8.5 h2 v-3"/><path d="M2 4.5 l2.3 2.5 l4.5-6" stroke="#8e9094" stroke-width="1"/></g>
<g transform="translate(38,508.3)">
<rect x="0.5" y="0.5" width="13" height="13" fill="#f4f8fc" stroke="#3a6fd0" stroke-width="1"/>
<path d="M8 13.5 L13.5 8 L13.5 13.5Z" fill="#5aa0e0"/>
<text x="1.6" y="6.6" font-family="Liberation Sans" font-weight="bold" font-size="6.5" fill="#e03030">G</text>
<path d="M1.5 9.8 h3 v-1.6 l3 2.6 l-3 2.6 v-1.6 h-3z" fill="#20a030"/>
<rect x="9.5" y="2" width="2.8" height="9" fill="#d8a830"/>
</g>
<text x="56" y="518.1" fill="#e6e6e8" font-size="8.5" letter-spacing="-0.15">Top holes</text>
<text x="217" y="518.1" fill="#dcdcde" font-size="8.4">G54</text>
<text x="250" y="518.1" fill="#2aa79b" font-size="8.4">T#4</text>
<text x="283.5" y="518.1" fill="#8a8c92" font-size="8.2">20mm Cylindrical ...</text>
<g transform="translate(368.5,510.6)" stroke="#54565c" fill="none" stroke-width="0.9"><path d="M2.5 0.5 h-2 v8 h2 M6.5 8.5 h2 v-3"/><path d="M2 4.5 l2.3 2.5 l4.5-6" stroke="#8e9094" stroke-width="1"/></g>
<g transform="translate(38,523.6)">
<rect x="0.5" y="0.5" width="13" height="13" fill="#f4f8fc" stroke="#3a6fd0" stroke-width="1"/>
<path d="M8 13.5 L13.5 8 L13.5 13.5Z" fill="#5aa0e0"/>
<text x="1.6" y="6.6" font-family="Liberation Sans" font-weight="bold" font-size="6.5" fill="#e03030">G</text>
<path d="M1.5 9.8 h3 v-1.6 l3 2.6 l-3 2.6 v-1.6 h-3z" fill="#20a030"/>
<rect x="9.5" y="2" width="2.8" height="9" fill="#d8a830"/>
</g>
<text x="56" y="533.4" fill="#e6e6e8" font-size="8.5" letter-spacing="-0.15">5D contour</text>
<text x="217" y="533.4" fill="#dcdcde" font-size="8.4">G54</text>
<text x="250" y="533.4" fill="#2aa79b" font-size="8.4">T#4</text>
<text x="283.5" y="533.4" fill="#8a8c92" font-size="8.2">20mm Cylindrical ...</text>
<g transform="translate(368.5,525.9)" stroke="#54565c" fill="none" stroke-width="0.9"><path d="M2.5 0.5 h-2 v8 h2 M6.5 8.5 h2 v-3"/><path d="M2 4.5 l2.3 2.5 l4.5-6" stroke="#8e9094" stroke-width="1"/></g>

<!-- viewport toolbar -->
<rect x="600" y="41" width="434" height="24" rx="4" fill="#2b2e37"/>
<g fill="#dcdde0"><rect x="607" y="48" width="11" height="1"/><rect x="607" y="50" width="11" height="1"/><rect x="607" y="52" width="11" height="1"/><rect x="607" y="54" width="11" height="1"/><rect x="607" y="56" width="11" height="2"/></g>
<g fill="#dcdde0"><rect x="635" y="48" width="6" height="1"/><rect x="635" y="50" width="6" height="1"/><rect x="635" y="52" width="6" height="1"/><rect x="635" y="54" width="6" height="1"/><rect x="630" y="56" width="11" height="2"/><rect x="631.3" y="48" width="1.4" height="5.5"/><circle cx="632" cy="53.4" r="1.3"/></g>
<g fill="#dcdde0"><rect x="652" y="48" width="11" height="2"/><rect x="652" y="51" width="11" height="1"/><rect x="652" y="53" width="11" height="1"/><rect x="652" y="55" width="11" height="1"/><rect x="652" y="57" width="11" height="1"/></g>
<g><path d="M675.2 50.2 v-1.4 a0.9 0.9 0 0 1 0.9-0.9 h1.4 M683.6 47.9 h1.4 a0.9 0.9 0 0 1 0.9 0.9 v1.4 M685.9 55.8 v1.4 a0.9 0.9 0 0 1 -0.9 0.9 h-1.4 M677.5 58.1 h-1.4 a0.9 0.9 0 0 1 -0.9-0.9 v-1.4" fill="none" stroke="#c8c9cd" stroke-width="1.1"/><rect x="677.1" y="49.5" width="6.9" height="6.9" rx="1.8" transform="rotate(45 680.55 52.95)" fill="#8e9096"/></g>
<path d="M710 48.5 h3 v4.6 h2.6 l-4.1 4.5 l-4.1-4.5 h2.6z" fill="#e6e6e8"/>
<path d="M732.5 57.6 h3 v-4.6 h2.6 l-4.1-4.5 l-4.1 4.5 h2.6z" fill="#e6e6e8"/>
<circle cx="756.4" cy="53" r="5.8" fill="#f2c23a"/><rect x="755.6" y="49.6" width="1.6" height="4.4" fill="#2b2e37"/><circle cx="756.4" cy="56" r="0.9" fill="#2b2e37"/>
<rect x="774" y="47.8" width="10.3" height="10.1" fill="#8e9096"/><rect x="774.6" y="48.4" width="9.1" height="3.8" fill="#eef0f4"/><rect x="774.6" y="49.8" width="9.1" height="0.6" fill="#b0b2b8"/><g fill="#c4c6ca"><rect x="774.7" y="53" width="3" height="1"/><rect x="774.7" y="54.8" width="3" height="1"/><rect x="774.7" y="56.6" width="3" height="1"/></g><path d="M780.2 54.2 h3.2 v1.6 l-1.6 1.3 l-1.6-1.3z" fill="#f0f0f4"/>
<path d="M800.15 47.45 L803.45 47.45 L803.47 49.06 L804.21 49.48 L805.61 48.69 L807.26 51.56 L805.88 52.38 L805.88 53.22 L807.26 54.04 L805.61 56.91 L804.21 56.12 L803.47 56.54 L803.45 58.15 L800.15 58.15 L800.13 56.54 L799.39 56.12 L797.99 56.91 L796.34 54.04 L797.72 53.22 L797.72 52.38 L796.34 51.56 L797.99 48.69 L799.39 49.48 L800.13 49.06Z" fill="#eef0f6"/><circle cx="801.8" cy="52.8" r="1.9" fill="#2b2e37"/>
<rect x="827.6" y="48" width="10" height="9.9" fill="#f04b55"/>
<rect x="850.3" y="48.3" width="1.5" height="9.3" fill="#e6e6e8"/><path d="M860 48.3 v9.3 l-6.8-4.65z" fill="#e6e6e8"/>
<path d="M873.8 47.8 v10.6 l8.8-5.3z" fill="#e8e8f0"/>
<path d="M895.4 48.3 v9.3 l6.8-4.65z" fill="#e6e6e8"/><rect x="903.6" y="48.3" width="1.5" height="9.3" fill="#e6e6e8"/>
<rect x="920.5" y="52" width="33" height="2" fill="#f0f0f2"/><rect x="953" y="52.6" width="48.7" height="0.9" fill="#9a9ca0"/><circle cx="953.6" cy="53" r="3.8" fill="#f0f0f2"/>
<g fill="#eeeef0"><circle cx="1017.8" cy="49.2" r="1.7"/><circle cx="1025.9" cy="49.2" r="1.7"/><circle cx="1017.8" cy="56.9" r="1.7"/><circle cx="1025.9" cy="56.9" r="1.7"/></g>
<!-- dropdown circle -->
<circle cx="1278" cy="51" r="12.5" fill="none" stroke="#101116" stroke-width="1"/><circle cx="1257.7" cy="51" r="12.5" fill="#2b2e37"/>
<path d="M1254 49.2 h7.4 l-3.7 3.8z" fill="#f4f4f6"/>
<polygon points="450,610.2 482.6,616.3 471,632.6 440.1,626.2" fill="#303238"/>
<polygon points="440.1,626.2 471,632.6 472.1,661.1 438.4,657" fill="#2c2e34"/>
<polygon points="471,632.6 482.6,616.3 482.6,646.6 472.1,661.1" fill="#27292e"/>
<g stroke="#22242a" stroke-width="0.6" fill="none"><polyline points="440.1,626.2 471,632.6 482.6,616.3"/><line x1="471" y1="632.6" x2="472.1" y2="661.1"/></g>
<text x="0" y="0" transform="translate(454,622) rotate(12) skewX(-20)" fill="#e0e0e2" font-size="7" font-style="italic">Top</text>
<text x="0" y="0" transform="translate(446.5,645.5) rotate(7)" fill="#e6e6e8" font-size="8.2">Front</text>
<text x="0" y="0" transform="translate(477,646) rotate(-62) " fill="#d8d8da" font-size="6" font-style="italic">Ri</text>
<line x1="437.8" y1="623.3" x2="437.8" y2="657" stroke="#2a56c8" stroke-width="1.6"/>
<line x1="437.8" y1="657" x2="475.6" y2="663.8" stroke="#d8145a" stroke-width="1.6"/>
<line x1="437.8" y1="657" x2="452.4" y2="637.3" stroke="#30a878" stroke-width="1.1"/>
<text x="434.2" y="620.6" fill="#2a5ad0" font-size="7.2" font-weight="bold">Z</text>
<text x="452.8" y="637.3" fill="#30a878" font-size="7">Y</text>
<text x="481.5" y="667.5" fill="#d8145a" font-size="6">X</text>
<rect x="470.4" y="665.2" width="59.4" height="22" rx="3" fill="#2b2e37"/>
<rect x="476.8" y="671" width="7" height="7" fill="#f4f4f6"/><path d="M475.2 671 v-1.6 h1.6 M483.6 669.4 h1.6 v1.6 M475.2 678 v1.6" fill="none" stroke="#2aa79b" stroke-width="1"/>
<circle cx="499.8" cy="675.5" r="5.2" fill="#c8d0dc"/><path d="M499.8 670.3 v10.4 M494.6 675.5 h10.4" stroke="#8a94a4" stroke-width="0.6"/>
<path d="M514 673 l5-3 l6 2 v6 l-5 3 l-6-2z" fill="#e8eaee"/><path d="M514 673 l6 2 l5-3 M520 675 v6" fill="none" stroke="#8a8c92" stroke-width="0.6"/>
<!-- bottom right -->
<rect x="1097.7" y="667.5" width="19" height="20" rx="3" fill="#24262d" stroke="#2f3239" stroke-width="1"/>
<path d="M1107.2 671 v8 M1103.2 675 h8" stroke="#b0b2b6" stroke-width="1.1"/>
<rect x="1121.3" y="667.5" width="86.2" height="20" rx="3" fill="#24262d" stroke="#2f3239" stroke-width="1"/>
<path d="M1130.7 669.5 v3" stroke="#7e8085" stroke-width="1"/><circle cx="1130.7" cy="677" r="2.6" fill="#2aa79b"/>
<text x="1142.5" y="680" fill="#eeeef0" font-size="8.8">Global CS</text>
<rect x="1212.3" y="667.5" width="19.6" height="20" rx="3" fill="#24262d" stroke="#2f3239" stroke-width="1"/>
<path d="M1218.5 680 v-3.5 a3.5 3.5 0 0 1 7 0 v3.5" fill="none" stroke="#b0b2b6" stroke-width="1.1"/>
<text x="1242.8" y="677.3" fill="#e8e8ea" font-size="8.8">0%</text>
<rect x="1265.2" y="664" width="6.4" height="20" fill="none" stroke="#2aa79b" stroke-width="1.2"/>
</svg>
</body></html>
